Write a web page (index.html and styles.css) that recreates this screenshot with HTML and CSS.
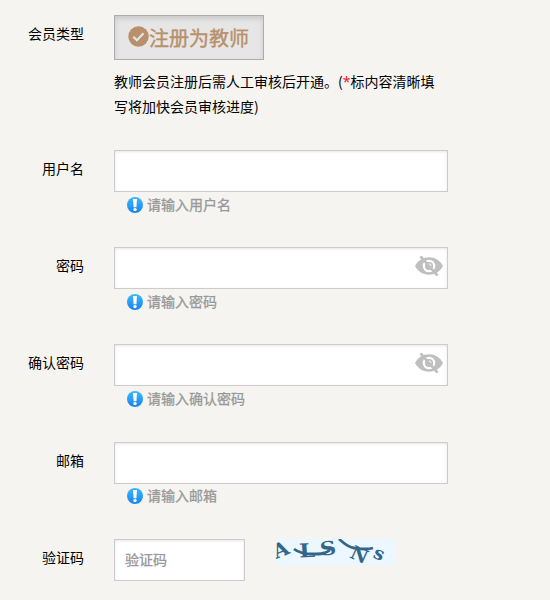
FILE: index.html
```html
<!DOCTYPE html>
<html lang="zh-CN">
<head>
    <meta charset="UTF-8">
    <meta name="viewport" content="width=device-width, initial-scale=1.0">
    <title>会员注册</title>
    <link rel="stylesheet" href="styles.css">
</head>
<body>

<svg width="0" height="0" class="icon-defs">
    <defs>
        <linearGradient id="tip-blue" x1="0" y1="0" x2="0" y2="1">
            <stop offset="0" stop-color="#3eb8ff"/>
            <stop offset="1" stop-color="#1683ee"/>
        </linearGradient>
        <symbol id="icon-tip" viewBox="0 0 16 16">
            <circle cx="8" cy="8" r="8" fill="url(#tip-blue)"/>
            <path d="M6 2h4L9.400 10.200H6.600z" fill="#fff"/>
            <circle cx="8" cy="12.600" r="1.700" fill="#fff"/>
        </symbol>
        <symbol id="icon-eye" viewBox="0 0 28 20">
            <path d="M0 10C3 4.500 8 1.300 14 1.300S25 4.500 28 10C25 15.500 20 18.700 14 18.700S3 15.500 0 10z" fill="#bfbfbf"/>
            <circle cx="14" cy="10" r="5.200" fill="none" stroke="#fff" stroke-width="2.200"/>
            <path d="M5.500 0.300L22.500 19.700" stroke="#bfbfbf" stroke-width="2.600"/>
            <ellipse cx="14" cy="10" rx="3" ry="3.800" fill="#bfbfbf"/>
            <path d="M14 7.800q2 0.300 2 2.300" fill="none" stroke="#fff" stroke-width="1"/>
        </symbol>
    </defs>
</svg>

<form class="reg-form">
    <div class="row row-type">
        <label>会员类型</label>
        <div class="field">
            <button type="button" class="type-button">
                <svg width="21" height="21" viewBox="0 0 21 21"><circle cx="10.500" cy="10.500" r="10.200" fill="#b8906a"/><path d="M5.300 10.700l3.600 3.500 6.700-7" fill="none" stroke="#e5e5e5" stroke-width="2.200"/></svg><span>注册为教师</span>
            </button>
            <p class="desc">教师会员注册后需人工审核后开通。(<span class="star">*</span>标内容清晰填写将加快会员审核进度)</p>
        </div>
    </div>

    <div class="row">
        <label for="username">用户名</label>
        <div class="field">
            <input type="text" id="username">
            <div class="tip"><svg width="16" height="16"><use href="#icon-tip"/></svg>请输入用户名</div>
        </div>
    </div>

    <div class="row">
        <label for="password">密码</label>
        <div class="field">
            <input type="password" id="password">
            <svg class="eye" width="28" height="20"><use href="#icon-eye"/></svg>
            <div class="tip"><svg width="16" height="16"><use href="#icon-tip"/></svg>请输入密码</div>
        </div>
    </div>

    <div class="row">
        <label for="password2">确认密码</label>
        <div class="field">
            <input type="password" id="password2">
            <svg class="eye" width="28" height="20"><use href="#icon-eye"/></svg>
            <div class="tip"><svg width="16" height="16"><use href="#icon-tip"/></svg>请输入确认密码</div>
        </div>
    </div>

    <div class="row">
        <label for="email">邮箱</label>
        <div class="field">
            <input type="text" id="email">
            <div class="tip"><svg width="16" height="16"><use href="#icon-tip"/></svg>请输入邮箱</div>
        </div>
    </div>

    <div class="row row-code">
        <label for="code">验证码</label>
        <div class="field field-code">
            <input type="text" id="code" placeholder="验证码">
            <svg class="captcha" width="120" height="26" viewBox="0 0 120 26">
                <text x="-2" y="18" font-size="20" transform="rotate(-22 5 11)">A</text>
                <text x="24" y="18" font-size="19" textLength="16" lengthAdjust="spacingAndGlyphs" transform="rotate(-3 32 11)">L</text>
                <text x="45" y="16" font-size="19" textLength="16" lengthAdjust="spacingAndGlyphs" transform="rotate(-8 53 10)">S</text>
                <text x="76" y="22" font-size="19" transform="rotate(24 84 15)">N</text>
                <text x="99" y="21" font-size="18" transform="rotate(22 105 15)">s</text>
                <path d="M19 10c5 4 11 5 19 5s12 0 17-4M64 0c5 4 8 8 15 9s13 2 19 0"/>
            </svg>
        </div>
    </div>
</form>

</body>
</html>
```

FILE: styles.css
```css
body {
    margin: 0;
    background-color: #f5f4f0;
    font-family: "Noto Sans CJK SC", sans-serif;
    font-size: 14px;
    color: #000;
}
.icon-defs {
    display: block;
}
.reg-form {
    padding-top: 15px;
}
.row {
    display: flex;
    height: 97.2px;
}
.row-type {
    height: 135px;
}
.row-code {
    height: 42px;
}
.row label {
    width: 84px;
    margin-right: 30px;
    line-height: 36px;
    text-align: right;
}
.field {
    position: relative;
    width: 334px;
}
.type-button {
    display: flex;
    align-items: center;
    box-sizing: border-box;
    width: 150px;
    height: 45px;
    padding: 0 0 0 13px;
    background-color: #e6e6e6;
    border: 1px solid #adadad;
    box-shadow: inset 0 3px 5px rgba(0, 0, 0, 0.125);
    color: #b8906a;
    font-family: inherit;
    font-size: 20px;
    line-height: 43px;
    -webkit-text-stroke: 0.4px #b8906a;
}
.type-button svg {
    margin-top: -2px;
}
.desc {
    width: 325px;
    margin: 9px 0 0;
    line-height: 25px;
}
.star {
    color: #f01030;
    font-family: "Noto Sans", sans-serif;
    line-height: 1;
}
input {
    display: block;
    box-sizing: border-box;
    width: 334px;
    height: 42px;
    padding: 5px 10px 7px;
    background-color: #fff;
    border: 1px solid #ccc;
    box-shadow: inset 0 1px 3px rgba(0, 0, 0, 0.1);
    font-family: inherit;
    font-size: 14px;
}
input::placeholder {
    color: #999;
    -webkit-text-stroke: 0.3px #999;
}
.tip {
    display: flex;
    align-items: center;
    gap: 4px;
    margin-top: -0.2px;
    padding-left: 13px;
    line-height: 24px;
    color: #999;
    -webkit-text-stroke: 0.3px #999;
}
.tip svg {
    margin-top: 2px;
}
.eye {
    position: absolute;
    top: 9px;
    right: 5px;
}
.field-code {
    display: flex;
    align-items: flex-start;
    gap: 30px;
}
.field-code input {
    width: 131px;
}
.captcha {
    background-color: #edf7ff;
}
.captcha text {
    font-family: "DejaVu Serif", serif;
    font-weight: bold;
    fill: #336688;
}
.captcha path {
    fill: none;
    stroke: #336688;
    stroke-width: 2.8;
}
```
